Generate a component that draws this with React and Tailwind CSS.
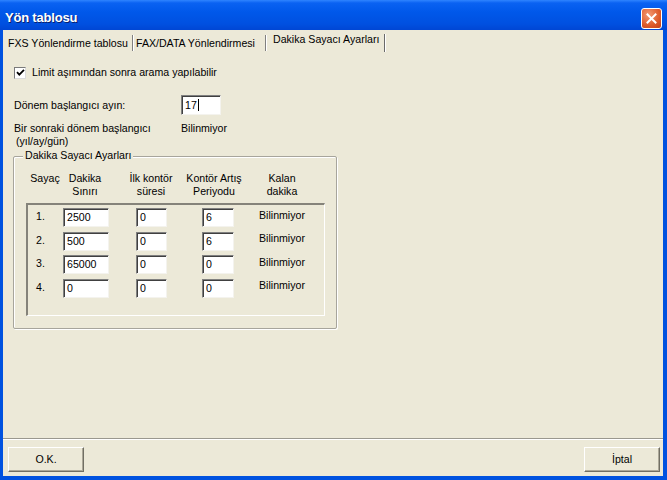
import React from "react";

const inputCls =
  "h-[19px] bg-white border border-[#808080] border-r-[#F4F3EE] border-b-[#F4F3EE] shadow-[inset_1px_1px_0_#404040] pl-[3px] flex items-center leading-none";

function Field({ w, children }) {
  return (
    <div className={inputCls} style={{ width: w }}>
      {children}
    </div>
  );
}

const rows = [
  ["1.", "2500", "0", "6"],
  ["2.", "500", "0", "6"],
  ["3.", "65000", "0", "0"],
  ["4.", "0", "0", "0"],
];

function Button({ children }) {
  return (
    <div className="w-[76px] h-[25px] bg-[#ECE9D8] border border-white border-r-[#716F64] border-b-[#716F64] shadow-[inset_-1px_-1px_0_#ACA899] flex items-center justify-center text-black">
      {children}
    </div>
  );
}

export default function App() {
  return (
    <div className="w-[667px] h-[480px] bg-[#0052E0] flex flex-col font-['Liberation_Sans',Arial,sans-serif] text-[10.6px] text-black leading-[13px] overflow-hidden">
      {/* title bar */}
      <div className="h-[30px] shrink-0 flex items-center justify-between pl-[5px] pr-[5px] bg-[linear-gradient(#2F84FF_0px,#0A62F2_3px,#0058EA_12px,#0050E0_24px,#0046D4_30px)]">
        <div className="text-white font-bold text-[13px] tracking-[-0.2px] pt-[5px] [text-shadow:1px_1px_0_#0A1F6E]">
          Yön tablosu
        </div>
        <div className="w-[21px] h-[21px] mt-[7px] rounded-[3px] border border-white bg-[radial-gradient(circle_at_35%_30%,#F39A74,#DD5A2A_60%,#C2401A)] flex items-center justify-center">
          <svg width="11" height="11" viewBox="0 0 11 11">
            <path d="M1.5 1.5 L9.5 9.5 M9.5 1.5 L1.5 9.5" stroke="white" strokeWidth="2" strokeLinecap="square" />
          </svg>
        </div>
      </div>

      {/* body */}
      <div className="flex-1 ml-[3px] mr-[4px] mb-[4px] bg-[#ECE9D8] flex flex-col">
        {/* tabs */}
        <div className="h-[22px] shrink-0 flex">
          <div className="w-[129px] pl-[5px] pt-[7px]">FXS Yönlendirme tablosu</div>
          <div className="w-[2px] h-[16px] mt-[5px] border-l border-[#808080] border-r border-r-white" />
          <div className="w-[131px] pl-[2px] pt-[7px]">FAX/DATA Yönlendirmesi</div>
          <div className="w-[2px] h-[16px] mt-[5px] border-l border-[#808080] border-r border-r-white" />
          <div className="w-[117px] pl-[6px] pt-[3px]">Dakika Sayacı Ayarları</div>
          <div className="w-[2px] h-[18px] mt-[4px] border-l border-[#6A6A6A] border-r border-r-white" />
        </div>

        {/* content */}
        <div className="flex-1 flex flex-col">
          <div className="mt-[14px] ml-[11px] flex items-center">
            <div className="w-[12px] h-[12px] bg-white border border-[#7A7A7A] border-r-[#DADADA] border-b-[#DADADA] flex items-center justify-center">
              <svg width="9" height="9" viewBox="0 0 9 9">
                <path d="M1 4.2 L3.3 6.6 L8 1.8" fill="none" stroke="black" strokeWidth="1.8" />
              </svg>
            </div>
            <span className="ml-[6px]">Limit aşımından sonra arama yapılabilir</span>
          </div>

          <div className="mt-[16px] ml-[11px] flex items-center">
            <div className="w-[167px]">Dönem başlangıcı ayın:</div>
            <div className={inputCls + " w-[40px] h-[20px]"}>
              17
              <span className="w-px h-[12px] bg-black ml-[1px]" />
            </div>
          </div>

          <div className="mt-[7px] ml-[11px] flex">
            <div className="w-[167px]">
              <div>Bir sonraki dönem başlangıcı</div>
              <div className="pl-[2px]">(yıl/ay/gün)</div>
            </div>
            <div>Bilinmiyor</div>
          </div>

          {/* group box */}
          <div className="relative mt-[8px] ml-[10px] w-[324px] h-[173px] rounded-[2px] border border-[#A7A59C] shadow-[inset_1px_1px_0_white,1px_1px_0_white]">
            <div className="absolute -top-[8px] left-[9px] bg-[#ECE9D8] px-[2px]">
              Dakika Sayacı Ayarları
            </div>

            <div className="mt-[15px] ml-[14px] flex text-center">
              <div className="w-[34px]">Sayaç</div>
              <div className="w-[46px]">
                Dakika<br />Sınırı
              </div>
              <div className="w-[46px] ml-[20px]">
                İlk kontör<br />süresi
              </div>
              <div className="w-[56px] ml-[12px]">
                Kontör Artış<br />Periyodu
              </div>
              <div className="w-[52px] ml-[14px]">
                Kalan<br />dakika
              </div>
            </div>

            <div className="mt-[5px] ml-[12px] w-[299px] h-[113px] border-t-2 border-l-2 border-[#85837A] border-r border-b border-r-white border-b-white pt-[1px]">
              {rows.map((r, i) => (
                <div key={i} className="h-[23.5px] flex items-center">
                  <div className="w-[35px] pl-[8px] -mt-[2px]">{r[0]}</div>
                  <Field w="46px">{r[1]}</Field>
                  <div className="w-[27px]" />
                  <Field w="31px">{r[2]}</Field>
                  <div className="w-[35px]" />
                  <Field w="32px">{r[3]}</Field>
                  <div className="w-[25px]" />
                  <div className="-mt-[5px]">Bilinmiyor</div>
                </div>
              ))}
            </div>
          </div>
        </div>

        {/* footer */}
        <div className="h-[38px] shrink-0 border-t border-[#9A988E] shadow-[inset_0_1px_0_white] flex items-start justify-between pt-[8px] pl-[5px] pr-[3px]">
          <Button>O.K.</Button>
          <Button>İptal</Button>
        </div>
      </div>
    </div>
  );
}
